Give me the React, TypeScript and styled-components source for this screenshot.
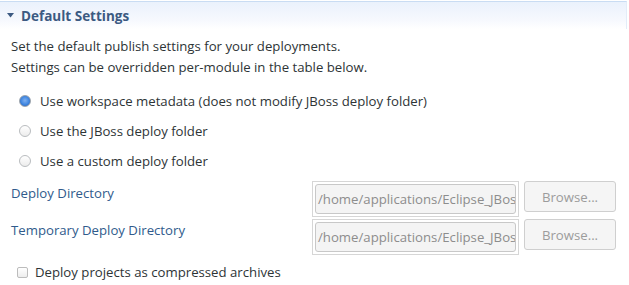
import React from "react";
import styled, { createGlobalStyle } from "styled-components";

const Global = createGlobalStyle`
  html, body { margin: 0; padding: 0; background: #ffffff; }
  body { font-family: "Open Sans", "DejaVu Sans", sans-serif; font-size: 13.2px; color: #2e3436; }
`;

const Page = styled.div`
  width: 629px;
  height: 285px;
  overflow: hidden;
  background: #fff;
`;

const Header = styled.div`
  height: 28px;
  margin-top: 1px;
  margin-right: 2px;
  border-top: 1px solid #c9dcf3;
  border-right: 1px solid #e3ecf8;
  background: linear-gradient(to bottom, #eaf1fc 0%, #f7f9fe 70%, #ffffff 100%);
  display: flex;
  align-items: center;
  gap: 7px;
  padding-left: 7px;
  box-sizing: border-box;
`;

const Title = styled.span`
  font-weight: bold;
  font-size: 13.5px;
  color: #3c5a82;
`;

const Body = styled.div`
  padding: 7px 0 0 11px;
  display: flex;
  flex-direction: column;
`;

const Para = styled.div`
  line-height: 21px;
`;

const RadioGroup = styled.div`
  display: flex;
  flex-direction: column;
  padding: 8px 0 0 8px;
`;

const RadioRow = styled.label`
  display: flex;
  align-items: center;
  gap: 9px;
  height: 30px;
`;

const RadioDot = styled.span<{ $on?: boolean }>`
  width: 12px;
  height: 12px;
  border-radius: 50%;
  box-sizing: border-box;
  border: 1px solid ${(p) => (p.$on ? "#9aa3ad" : "#b9bcbf")};
  background: ${(p) =>
    p.$on
      ? "radial-gradient(circle at 50% 45%, #7fb0f0 0%, #3f86e0 55%, #2f6fcc 75%, #e8ecf1 78%)"
      : "linear-gradient(#ffffff, #ececec)"};
`;

const FieldRow = styled.div`
  display: flex;
  align-items: flex-start;
`;

const FieldLabel = styled.span<{ $top: number }>`
  width: 301px;
  padding-top: ${(p) => p.$top}px;
  line-height: 18px;
  color: #305b8c;
`;

const FieldOuter = styled.div`
  width: 207px;
  height: 36px;
  box-sizing: border-box;
  border: 1px solid #d6d6d6;
  padding: 2px;
`;

const FieldInner = styled.div`
  height: 100%;
  box-sizing: border-box;
  border: 1px solid #c8c8c8;
  border-radius: 3px;
  background: #f4f4f4;
  color: #8d8d8d;
  display: flex;
  align-items: center;
  padding-left: 2px;
  overflow: hidden;
  white-space: nowrap;
`;

const BrowseBtn = styled.div`
  margin-left: 5px;
  width: 92px;
  height: 31px;
  box-sizing: border-box;
  border: 1px solid #cfcfcf;
  border-radius: 3px;
  background: #f5f5f5;
  color: #9c9c9c;
  display: flex;
  align-items: center;
  justify-content: center;
`;

const Fields = styled.div`
  display: flex;
  flex-direction: column;
  gap: 2px;
  margin-top: 5px;
`;

const CheckRow = styled.label`
  display: flex;
  align-items: center;
  gap: 7px;
  padding-left: 6px;
  margin-top: 8px;
  line-height: 18px;
`;

const CheckBox = styled.span`
  width: 11px;
  height: 11px;
  box-sizing: border-box;
  border: 1px solid #bcbcbc;
  border-radius: 2px;
  background: linear-gradient(#ffffff, #ededed);
`;

export default function App() {
  return (
    <Page>
      <Global />
      <Header>
        <svg width="7" height="5" viewBox="0 0 7 5">
          <polygon points="0,0 7,0 3.5,4.5" fill="#3c5a82" />
        </svg>
        <Title>Default Settings</Title>
      </Header>
      <Body>
        <Para>Set the default publish settings for your deployments.</Para>
        <Para>Settings can be overridden per-module in the table below.</Para>
        <RadioGroup>
          <RadioRow>
            <RadioDot $on />
            Use workspace metadata (does not modify JBoss deploy folder)
          </RadioRow>
          <RadioRow>
            <RadioDot />
            Use the JBoss deploy folder
          </RadioRow>
          <RadioRow>
            <RadioDot />
            Use a custom deploy folder
          </RadioRow>
        </RadioGroup>
        <Fields>
          <FieldRow>
            <FieldLabel $top={3}>Deploy Directory</FieldLabel>
            <FieldOuter>
              <FieldInner>/home/applications/Eclipse_JBoss</FieldInner>
            </FieldOuter>
            <BrowseBtn>Browse...</BrowseBtn>
          </FieldRow>
          <FieldRow>
            <FieldLabel $top={2}>Temporary Deploy Directory</FieldLabel>
            <FieldOuter>
              <FieldInner>/home/applications/Eclipse_JBoss</FieldInner>
            </FieldOuter>
            <BrowseBtn>Browse...</BrowseBtn>
          </FieldRow>
        </Fields>
        <CheckRow>
          <CheckBox />
          Deploy projects as compressed archives
        </CheckRow>
      </Body>
    </Page>
  );
}
